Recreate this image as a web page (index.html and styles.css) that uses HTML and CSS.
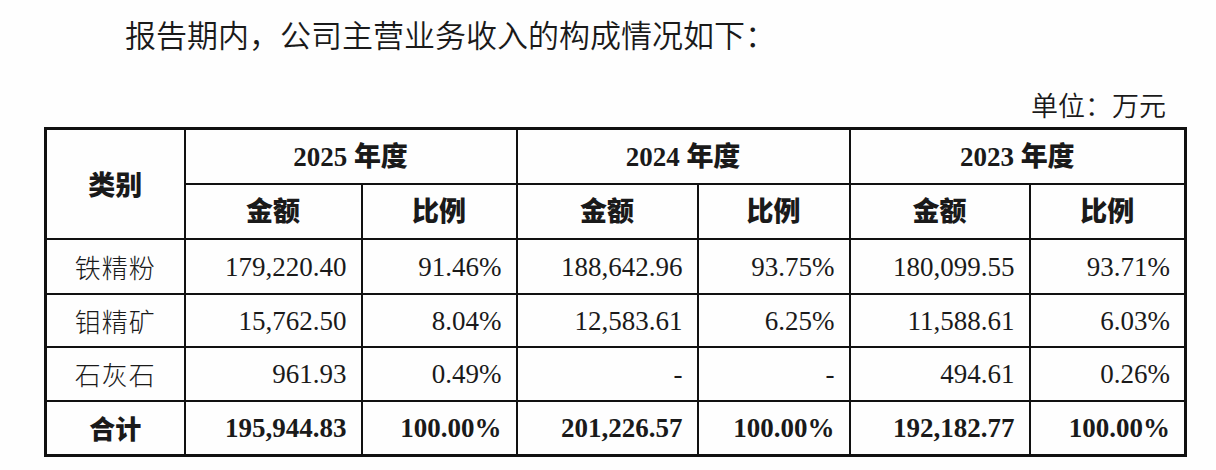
FILE: index.html
```html
<!DOCTYPE html>
<html lang="zh-CN">
<head>
<meta charset="utf-8">
<title>主营业务收入构成</title>
<link rel="stylesheet" href="styles.css">
</head>
<body>
<div class="page">
  <p class="intro">报告期内，公司主营业务收入的构成情况如下：</p>
  <div class="unit-row"><span class="unit">单位：万元</span></div>
  <table class="rev">
    <colgroup>
      <col class="c-cat">
      <col class="c-amt1">
      <col class="c-pct1">
      <col class="c-amt2">
      <col class="c-pct2">
      <col class="c-amt3">
      <col class="c-pct3">
    </colgroup>
    <thead>
      <tr class="h1">
        <th rowspan="2" class="cat-h">类别</th>
        <th colspan="2">2025 年度</th>
        <th colspan="2">2024 年度</th>
        <th colspan="2">2023 年度</th>
      </tr>
      <tr class="h2">
        <th>金额</th><th>比例</th>
        <th>金额</th><th>比例</th>
        <th>金额</th><th>比例</th>
      </tr>
    </thead>
    <tbody>
      <tr class="r1">
        <td class="cat">铁精粉</td>
        <td class="num">179,220.40</td><td class="num">91.46%</td>
        <td class="num">188,642.96</td><td class="num">93.75%</td>
        <td class="num">180,099.55</td><td class="num">93.71%</td>
      </tr>
      <tr class="r2">
        <td class="cat">钼精矿</td>
        <td class="num">15,762.50</td><td class="num">8.04%</td>
        <td class="num">12,583.61</td><td class="num">6.25%</td>
        <td class="num">11,588.61</td><td class="num">6.03%</td>
      </tr>
      <tr class="r3">
        <td class="cat">石灰石</td>
        <td class="num">961.93</td><td class="num">0.49%</td>
        <td class="num">-</td><td class="num">-</td>
        <td class="num">494.61</td><td class="num">0.26%</td>
      </tr>
      <tr class="total">
        <td class="cat">合计</td>
        <td class="num">195,944.83</td><td class="num">100.00%</td>
        <td class="num">201,226.57</td><td class="num">100.00%</td>
        <td class="num">192,182.77</td><td class="num">100.00%</td>
      </tr>
    </tbody>
  </table>
</div>
</body>
</html>
```

FILE: styles.css
```css
html, body {
  margin: 0;
  padding: 0;
  background: #fefefe;
}

.page {
  width: 1216px;
  height: 470px;
  color: #1a1a1a;
  font-family: "Liberation Serif", "Noto Sans CJK SC", serif;
}

.intro {
  margin: 0;
  padding: 16px 0 0 125px;
  height: 40px;
  font-family: "Noto Sans CJK SC", sans-serif;
  font-weight: 350;
  font-size: 31px;
  line-height: 36px;
  color: #1a1a1a;
}

.unit-row {
  display: flex;
  justify-content: flex-end;
  width: 1166px;
  padding-top: 33px;
  height: 38px;
}

.unit {
  font-family: "Noto Sans CJK SC", sans-serif;
  font-weight: 350;
  font-size: 27px;
  line-height: 32px;
  color: #1a1a1a;
}

.rev {
  margin-left: 44px;
  border-collapse: collapse;
  table-layout: fixed;
  width: 1140px;
  border: 3px solid #111;
}

.c-cat { width: 139px; }
.c-amt1 { width: 177px; }
.c-pct1 { width: 155px; }
.c-amt2 { width: 181px; }
.c-pct2 { width: 152px; }
.c-amt3 { width: 180px; }
.c-pct3 { width: 156px; }

.rev th,
.rev td {
  border: 2px solid #111;
  padding: 0;
  font-size: 27px;
  line-height: 30px;
}

.rev th {
  font-weight: 900;
  text-align: center;
}

.h1 th { height: 53px; }
.h2 th { height: 53px; }
.r1 td { height: 53px; }
.r2 td { height: 51px; }
.r3 td { height: 52px; }
.total td { height: 52px; }

.cat-h {
  font-family: "Noto Sans CJK SC", sans-serif;
  font-size: 26px;
}

.rev td.cat {
  text-align: center;
  font-family: "Noto Sans CJK SC", sans-serif;
  font-weight: 300;
  font-size: 26px;
  letter-spacing: 1px;
}

.rev td.num {
  text-align: right;
  padding-right: 14px;
}

.total td {
  font-weight: 700;
}

.rev .total td.cat {
  font-weight: 900;
  letter-spacing: 0;
}
```
